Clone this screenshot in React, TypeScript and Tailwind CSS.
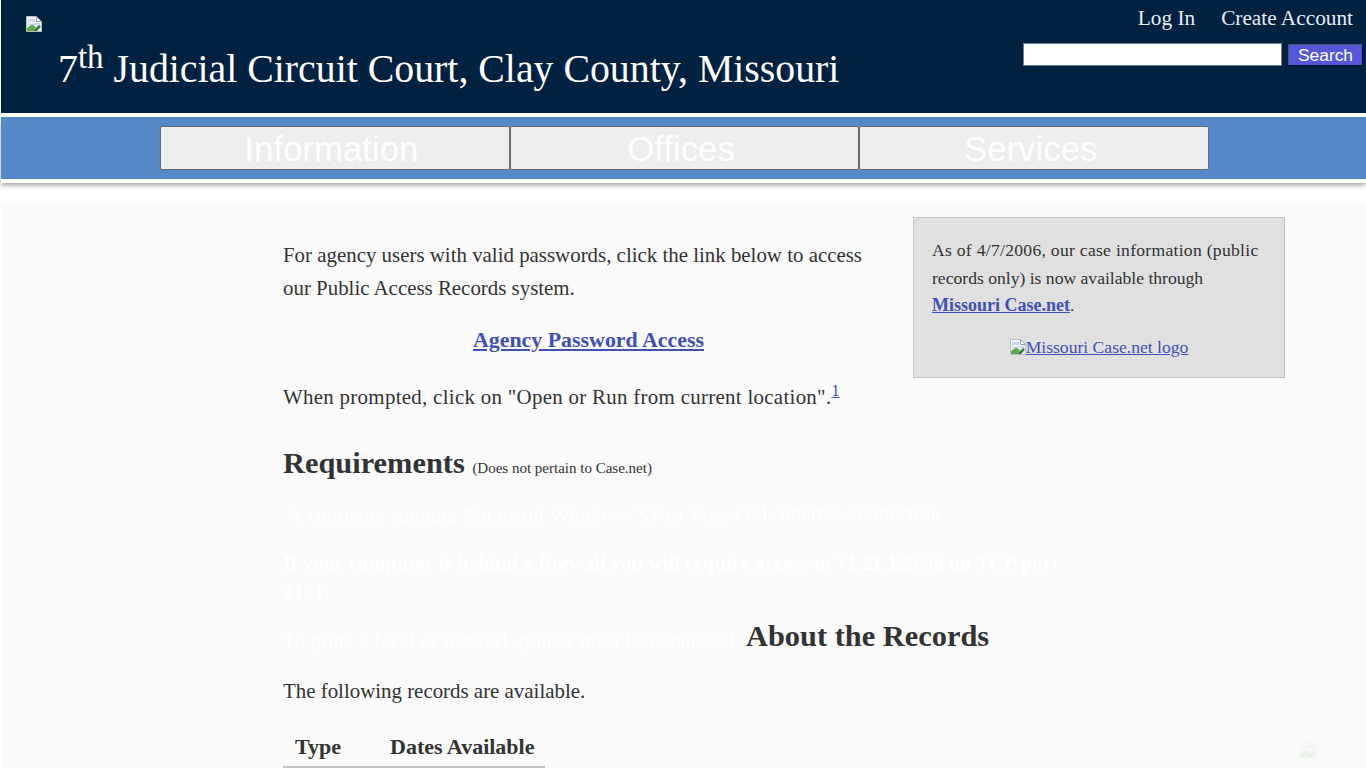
function BrokenImage({ className = '' }: { className?: string }) {
  return (
    <svg viewBox="0 0 16 16" className={`w-4 h-4 ${className}`}>
      <path d="M0.5 0.5H10.5L15.5 5.5V15.5H0.5Z" fill="#f4f6f8" stroke="#b9bcc0" />
      <path d="M10.5 0.5V5.5H15.5Z" fill="#ffffff" stroke="#9a9da1" />
      <path d="M2 3H9V7H14V9H2Z" fill="#c6d4f5" />
      <path d="M3 6.5C4 5 6 5 7 6.5C8 6 9.5 6.5 9.5 7.5H3Z" fill="#ffffff" />
      <path d="M1 15V12L6 8.5L10 11L7 15Z" fill="#5fa84a" />
      <path d="M7 15L13 9L15 10.5L11 15Z" fill="#2e7d32" />
    </svg>
  );
}

function NavItem({ label }: { label: string }) {
  return (
    <div className="flex-1 h-[44px] bg-[#eeeeee] border border-[#6b6b6b] rounded-[2px] flex items-center justify-center pr-[7px] pt-[2px] text-white text-[34.8px] font-['Liberation_Sans',sans-serif]">
      {label}
    </div>
  );
}

export default function App() {
  return (
    <div className="h-screen overflow-hidden bg-white font-['Liberation_Serif',serif] text-[#333333]">
      {/* Header */}
      <header className="ml-px h-[113px] bg-[#00213f] flex justify-between text-white">
        <div className="pl-[25px] pt-[16px]">
          <BrokenImage className="block" />
          <h1 className="ml-[32px] mt-[11px] text-[39.8px] leading-[52px] whitespace-nowrap">
            7<sup className="text-[33px] leading-none -top-[14px]">th</sup> Judicial Circuit Court, Clay County, Missouri
          </h1>
        </div>
        <div className="flex flex-col items-end pr-[4px] pt-[5px]">
          <div className="flex gap-[26px] pr-[9px] text-[21.3px] leading-[26px] text-[#e8eef5]">
            <span>Log In</span>
            <span>Create Account</span>
          </div>
          <div className="flex items-center gap-[6px] mt-[12px]">
            <div className="w-[259px] h-[23px] bg-white border border-[#6d7f91]" />
            <div className="w-[74px] h-[21px] bg-[#5656da] border-t border-l border-[#45586d] shadow-[1px_1px_0_#000f22] flex items-center justify-center text-[17.4px] text-white font-['Liberation_Sans',sans-serif]">
              Search
            </div>
          </div>
        </div>
      </header>

      {/* Nav */}
      <nav className="ml-px mt-[4px] h-[62px] bg-[#5588c8] pl-[159px] pt-[9px] shadow-[0_4px_0_#ffffff,0_6px_5px_#a39a96]">
        <div className="flex w-[1049px]">
          <NavItem label="Information" />
          <NavItem label="Offices" />
          <NavItem label="Services" />
        </div>
      </nav>

      {/* Content */}
      <main className="ml-px mt-[24px] h-[600px] bg-[#fafafa] pl-[282px] pr-[81px] pt-[14px]">
        <aside className="float-right w-[372px] h-[161px] bg-[#e0e0e0] border border-[#c2c2c2] pl-[18px] pr-[18px] pt-[19px] text-[17.6px] leading-[27.5px]">
          <p>
            <span className="tracking-[0.28px]">As of 4/7/2006, our case information (public</span> records only) is now available through
          </p>
          <p>
            <a className="font-bold underline text-[18px] text-[#3f51b5]">Missouri Case.net</a>.
          </p>
          <p className="mt-[14px] text-center text-[#3f51b5]">
            <a className="underline">
              <BrokenImage className="inline-block align-[-2px]" />Missouri Case.net logo
            </a>
          </p>
        </aside>

        <div className="w-[800px] text-[20.9px]">
          <p className="pt-[22px] w-[600px] leading-[33px]">
            For agency users with valid passwords, click the link below to access our Public Access Records system.
          </p>
          <p className="mt-[18px] w-[611px] text-center font-bold underline text-[21.9px] text-[#3f51b5] leading-[33px]">
            Agency Password Access
          </p>
          <p className="mt-[25px] leading-[33px] tracking-[0.3px]">
            When prompted, click on "Open or Run from current location".
            <sup className="text-[16px] underline text-[#3f51b5]">1</sup>
          </p>

          <h2 className="mt-[29px] leading-[40px] font-bold text-[30.4px]">
            Requirements <span className="font-normal text-[15px]">(Does not pertain to Case.net)</span>
          </h2>

          {/* white on near-white in the source page */}
          <div className="mt-[11px] flex items-baseline text-white text-[21px] leading-[33px] whitespace-nowrap">
            <span className="pl-[5px] w-[452px]">A computer running Microsoft Windows XP to Vista</span>
            <span className="-translate-y-[2px]">DSL internet connection</span>
          </div>
          <p className="mt-[17px] w-[780px] text-white font-bold text-[20.6px] leading-[29px]">
            If your computer is behind a firewall you will require access to 71.21.123.56 on TCP port 2101.
          </p>
          <div className="mt-[10px] flex items-baseline h-[40px]">
            <span className="w-[463px] shrink-0 text-white text-[21px] whitespace-nowrap overflow-hidden">To print, a local or network printer must be connected.</span>
            <h2 className="-translate-y-[1px] font-bold text-[30.4px] leading-[40px] whitespace-nowrap">About the Records</h2>
          </div>

          <p className="mt-[18px] leading-[33px]">The following records are available.</p>

          <table className="mt-[24px] border-collapse text-left text-[22px]">
            <thead>
              <tr className="border-b-[2px] border-[#c4c4c4]">
                <th className="pl-[12px] pr-[49px] pb-[4px] font-bold leading-[30px]">Type</th>
                <th className="pr-[11px] pb-[4px] font-bold leading-[30px]">Dates Available</th>
              </tr>
            </thead>
          </table>
        </div>
      </main>

      <div className="fixed right-[50px] bottom-[10px] opacity-10">
        <BrokenImage className="block" />
      </div>
    </div>
  );
}
